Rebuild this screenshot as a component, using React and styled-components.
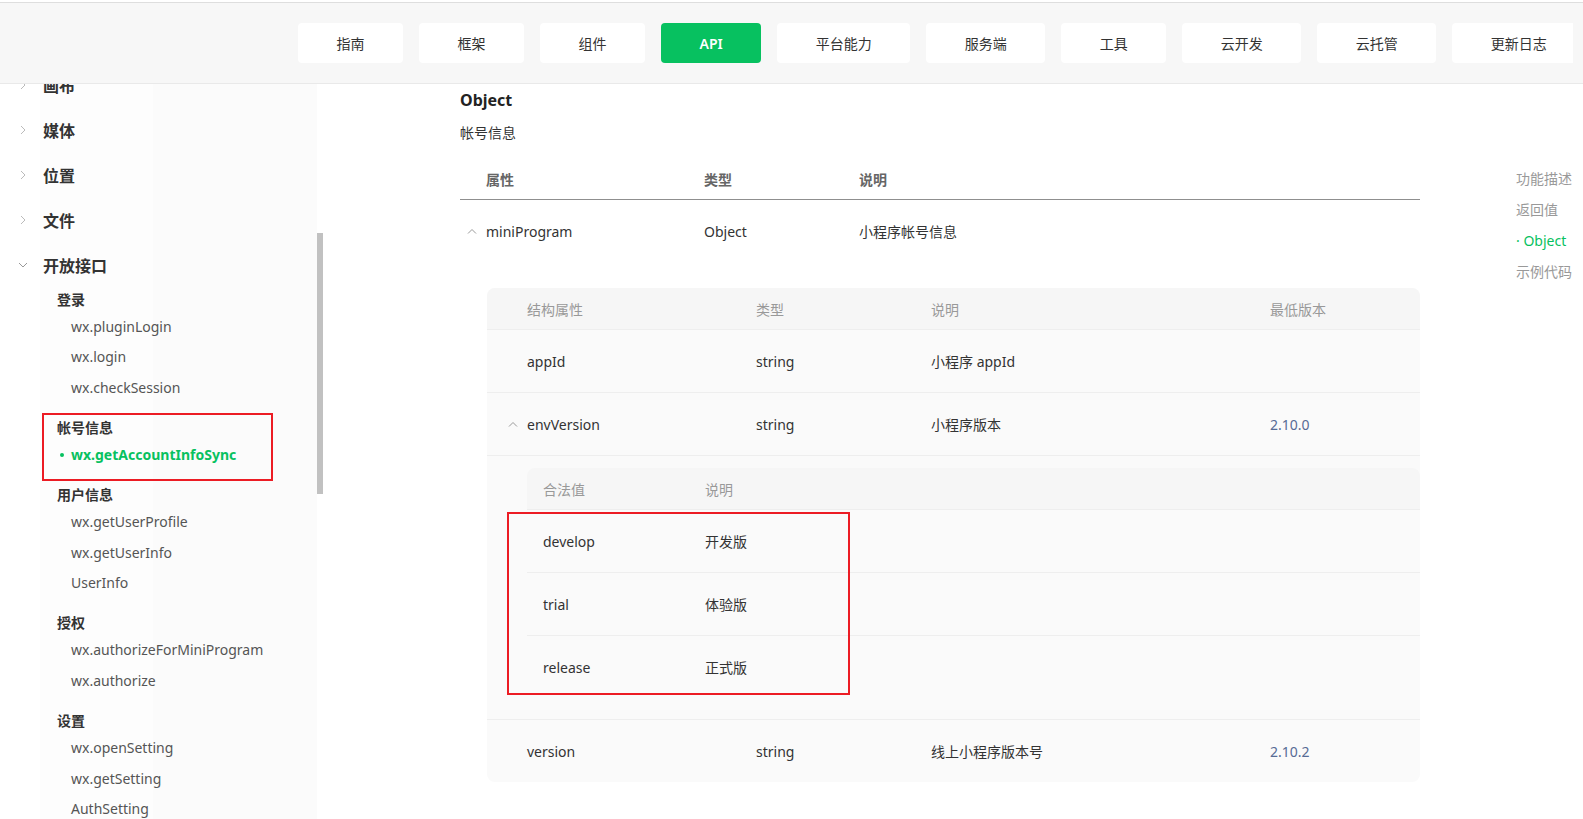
import React from 'react'
import styled, { createGlobalStyle } from 'styled-components'

const green = '#07c160'
const linkBlue = '#576b95'
const font = `'Noto Sans', 'Noto Sans CJK SC', sans-serif`

const GlobalStyle = createGlobalStyle`
  html, body {
    margin: 0;
    padding: 0;
    background: #fff;
  }
  body {
    font-family: ${font};
    color: #333;
  }
  * {
    box-sizing: border-box;
  }
`

const Page = styled.div`
  height: 100vh;
  padding-top: 2px;
  display: flex;
  flex-direction: column;
  overflow: hidden;
`

const Header = styled.header`
  flex-shrink: 0;
  height: 82px;
  background: #f7f7f7;
  border-top: 1px solid #dedede;
  border-bottom: 1px solid #e9e9e9;
  display: flex;
  align-items: center;
  padding: 0 10px 0 298px;
  position: relative;
  z-index: 2;
`

const Nav = styled.nav`
  flex: 1;
  min-width: 0;
  display: flex;
  gap: 16px;
  overflow: hidden;
`

const NavButton = styled.a`
  flex-shrink: 0;
  height: 40px;
  padding: 0 38.5px;
  display: flex;
  align-items: center;
  border-radius: 4px;
  font-size: 14px;
  background: ${p => (p.$active ? green : '#fff')};
  color: ${p => (p.$active ? '#fff' : '#333')};
  font-weight: ${p => (p.$active ? 600 : 400)};
  cursor: pointer;
`

const Body = styled.div`
  flex: 1;
  min-height: 0;
  display: flex;
`

const Sidebar = styled.aside`
  width: 317px;
  flex-shrink: 0;
  overflow: hidden;
  background: linear-gradient(to right, #fff 0 40px, #fdfdfd 40px 153px, #fbfbfb 153px);
`

const SideInner = styled.div`
  margin-top: -21.5px;
`

const Category = styled.div`
  height: 45px;
  display: flex;
  align-items: center;
  padding-left: 17.5px;
  font-size: 16px;
  font-weight: 700;
  color: #333;

  svg {
    margin-right: 15.5px;
    flex-shrink: 0;
  }
`

const Group = styled.div`
  position: relative;
  padding-left: 57px;
  margin-bottom: 12.75px;

  &:first-of-type {
    margin-top: 1px;
  }

  ${p =>
    p.$marked &&
    `
    &::after {
      content: '';
      position: absolute;
      left: 42px;
      width: 227px;
      top: -3px;
      bottom: -10.5px;
      border: 2px solid #ec1c24;
    }
  `}
`

const GroupTitle = styled.div`
  font-size: 14px;
  font-weight: 700;
  line-height: 24px;
  color: #333;
`

const SideLink = styled.div`
  position: relative;
  padding-left: 14px;
  font-size: 14px;
  line-height: 30.5px;
  color: ${p => (p.$active ? green : '#555')};
  font-weight: ${p => (p.$active ? 700 : 400)};
  white-space: nowrap;

  ${p =>
    p.$active &&
    `
    &::before {
      content: '';
      position: absolute;
      left: 3px;
      top: 13.5px;
      width: 4px;
      height: 4px;
      border-radius: 50%;
      background: ${green};
    }
  `}
`

const ScrollTrack = styled.div`
  width: 6px;
  flex-shrink: 0;
`

const Thumb = styled.div`
  margin-top: 149px;
  height: 261px;
  background: #c1c1c1;
`

const Main = styled.main`
  flex: 1;
  display: flex;
  padding-left: 137px;
  overflow: hidden;
`

const Article = styled.article`
  width: 960px;
  flex-shrink: 0;
`

const Title = styled.h3`
  margin: 4px 0 0;
  font-size: 16px;
  line-height: 24px;
  font-weight: 700;
  color: #222;
`

const Subtitle = styled.p`
  margin: 10px 0 0;
  font-size: 14px;
  line-height: 22px;
  color: #333;
`

const Table = styled.div`
  margin-top: 14px;
`

const HeadRow = styled.div`
  display: grid;
  grid-template-columns: 244px 155px 1fr;
  height: 42px;
  align-items: center;
  border-bottom: 1px solid #8f8f8f;
  font-size: 14px;
  font-weight: 600;
  color: #666;

  & > :first-child {
    padding-left: 26px;
  }
`

const Row = styled.div`
  display: grid;
  grid-template-columns: 244px 155px 1fr;
  height: 62px;
  align-items: center;
  font-size: 14px;
  color: #333;

  & > :first-child {
    padding-left: 7px;
  }
`

const NameCell = styled.div`
  display: flex;
  align-items: center;

  svg {
    width: 10px;
    margin-right: 9px;
    flex-shrink: 0;
  }
`

const ExpandArea = styled.div`
  padding: 26px 0 26px 27px;
`

const Card = styled.div`
  background: #fafafa;
  border-radius: 8px;
`

const CardHead = styled.div`
  display: grid;
  grid-template-columns: ${p => p.$cols};
  height: 42px;
  align-items: center;
  background: #f6f6f6;
  border-bottom: 1px solid #eee;
  border-radius: 8px 8px 0 0;
  font-size: 14px;
  color: #999;

  & > :first-child {
    padding-left: ${p => p.$pad}px;
  }
`

const CardRow = styled.div`
  display: grid;
  grid-template-columns: ${p => p.$cols};
  height: 63px;
  align-items: center;
  border-bottom: 1px solid #eee;
  font-size: 14px;
  color: #333;

  &:last-child {
    border-bottom: none;
    height: 62px;
  }

  & > :first-child {
    padding-left: ${p => p.$pad}px;
  }
`

const CardExpand = styled.div`
  padding: 12px 0 21px 40px;
  border-bottom: 1px solid #eee;
`

const ValueRows = styled.div`
  position: relative;

  &::after {
    content: '';
    position: absolute;
    left: -20px;
    width: 339px;
    top: 2px;
    bottom: 3px;
    border: 2px solid #ec1c24;
  }
`

const Version = styled.span`
  color: ${linkBlue};
`

const Toc = styled.nav`
  margin: 78.5px 0 0 96px;
  flex-shrink: 0;
`

const TocItem = styled.div`
  font-size: 14px;
  line-height: 31px;
  white-space: nowrap;
  color: ${p => (p.$active ? green : '#999')};
`

const ChevronRight = () => (
  <svg width='10' height='10' viewBox='0 0 10 10'>
    <polyline points='3,1 7,5 3,9' fill='none' stroke='#bbb' strokeWidth='1' />
  </svg>
)

const ChevronDown = () => (
  <svg width='10' height='10' viewBox='0 0 10 10'>
    <polyline points='1,3 5,7 9,3' fill='none' stroke='#999' strokeWidth='1' />
  </svg>
)

const ChevronUp = () => (
  <svg width='10' height='6' viewBox='0 0 10 6'>
    <polyline points='1,5.5 5,1.5 9,5.5' fill='none' stroke='#999' strokeWidth='1' />
  </svg>
)

const navItems = ['指南', '框架', '组件', 'API', '平台能力', '服务端', '工具', '云开发', '云托管', '更新日志']

const categories = ['画布', '媒体', '位置', '文件']

const groups = [
  { title: '登录', links: ['wx.pluginLogin', 'wx.login', 'wx.checkSession'] },
  { title: '帐号信息', links: ['wx.getAccountInfoSync'], active: 0, marked: true },
  { title: '用户信息', links: ['wx.getUserProfile', 'wx.getUserInfo', 'UserInfo'] },
  { title: '授权', links: ['wx.authorizeForMiniProgram', 'wx.authorize'] },
  { title: '设置', links: ['wx.openSetting', 'wx.getSetting', 'AuthSetting'] }
]

const fieldCols = '269px 175px 339px 1fr'
const valueCols = '178px 1fr'

const values = [
  ['develop', '开发版'],
  ['trial', '体验版'],
  ['release', '正式版']
]

function App() {
  return (
    <Page>
      <GlobalStyle />
      <Header>
        <Nav>
          {navItems.map(item => (
            <NavButton key={item} $active={item === 'API'}>
              {item}
            </NavButton>
          ))}
        </Nav>
      </Header>
      <Body>
        <Sidebar>
          <SideInner>
            {categories.map(c => (
              <Category key={c}>
                <ChevronRight />
                {c}
              </Category>
            ))}
            <Category>
              <ChevronDown />
              开放接口
            </Category>
            {groups.map(g => (
              <Group key={g.title} $marked={g.marked}>
                <GroupTitle>{g.title}</GroupTitle>
                {g.links.map((l, i) => (
                  <SideLink key={l} $active={g.active === i}>
                    {l}
                  </SideLink>
                ))}
              </Group>
            ))}
          </SideInner>
        </Sidebar>
        <ScrollTrack>
          <Thumb />
        </ScrollTrack>
        <Main>
          <Article>
            <Title>Object</Title>
            <Subtitle>帐号信息</Subtitle>
            <Table>
              <HeadRow>
                <div>属性</div>
                <div>类型</div>
                <div>说明</div>
              </HeadRow>
              <Row>
                <NameCell>
                  <ChevronUp />
                  miniProgram
                </NameCell>
                <div>Object</div>
                <div>小程序帐号信息</div>
              </Row>
              <ExpandArea>
                <Card>
                  <CardHead $cols={fieldCols} $pad={40}>
                    <div>结构属性</div>
                    <div>类型</div>
                    <div>说明</div>
                    <div>最低版本</div>
                  </CardHead>
                  <CardRow $cols={fieldCols} $pad={40}>
                    <div>appId</div>
                    <div>string</div>
                    <div>小程序 appId</div>
                    <div />
                  </CardRow>
                  <CardRow $cols={fieldCols} $pad={21}>
                    <NameCell>
                      <ChevronUp />
                      envVersion
                    </NameCell>
                    <div>string</div>
                    <div>小程序版本</div>
                    <Version>2.10.0</Version>
                  </CardRow>
                  <CardExpand>
                    <Card>
                      <CardHead $cols={valueCols} $pad={16}>
                        <div>合法值</div>
                        <div>说明</div>
                      </CardHead>
                      <ValueRows>
                        {values.map(([v, d]) => (
                          <CardRow key={v} $cols={valueCols} $pad={16}>
                            <div>{v}</div>
                            <div>{d}</div>
                          </CardRow>
                        ))}
                      </ValueRows>
                    </Card>
                  </CardExpand>
                  <CardRow $cols={fieldCols} $pad={40}>
                    <div>version</div>
                    <div>string</div>
                    <div>线上小程序版本号</div>
                    <Version>2.10.2</Version>
                  </CardRow>
                </Card>
              </ExpandArea>
            </Table>
          </Article>
          <Toc>
            <TocItem>功能描述</TocItem>
            <TocItem>返回值</TocItem>
            <TocItem $active>· Object</TocItem>
            <TocItem>示例代码</TocItem>
          </Toc>
        </Main>
      </Body>
    </Page>
  )
}

export default App
